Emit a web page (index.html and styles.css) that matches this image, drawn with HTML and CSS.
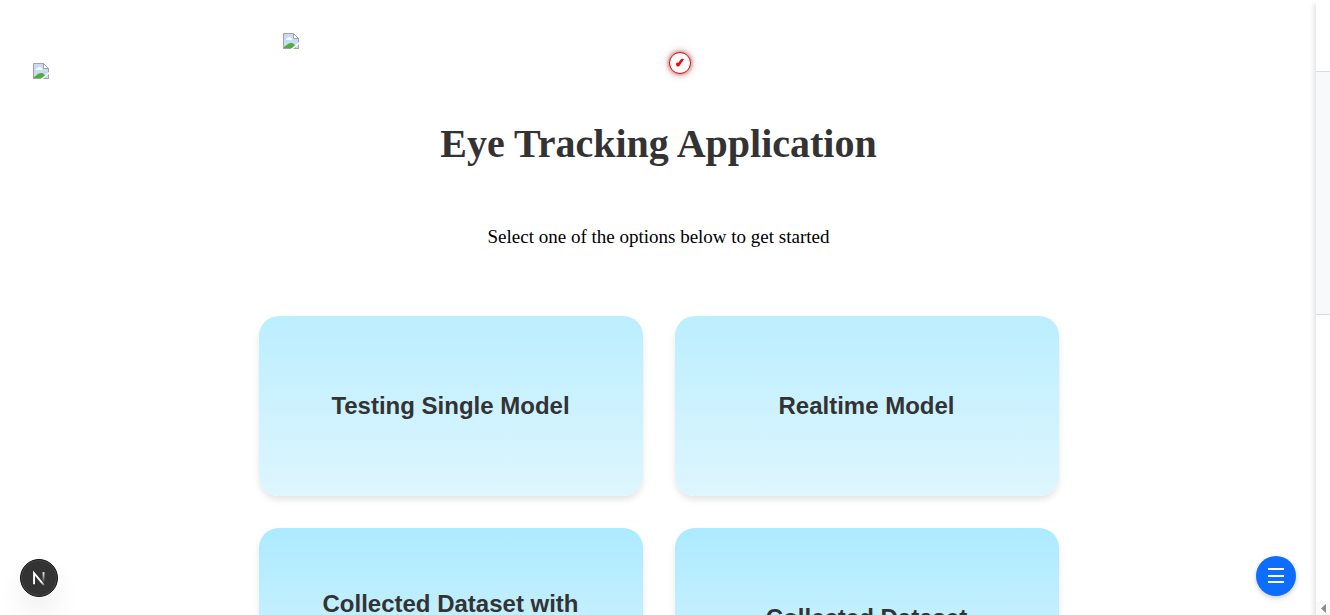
FILE: index.html
```html
<!DOCTYPE html>
<html lang="en">
<head>
<meta charset="utf-8">
<meta name="viewport" content="width=device-width, initial-scale=1">
<title>Eye Tracking Application</title>
<link rel="stylesheet" href="styles.css">
</head>
<body>
<svg class="defs" aria-hidden="true">
  <symbol id="missing-image" viewBox="0 0 16 16">
    <path d="M.5.5h10l5 5v10H.5z" fill="#c6dcf5" stroke="#a3a3a3"/>
    <path d="M3 6.500a1.500 1.500 0 0 1 1.500-1.500 2 2 0 0 1 3.500 0 1 1 0 0 1 0 2H3z" fill="#fff"/>
    <path d="M1 15v-1c2-1 4-4 7-4 2 0 4 1 5 5z" fill="#4caf3c"/>
    <path d="M16.500 8.500v2l-6 6H7z" fill="#fff"/>
    <path d="M10.500.5v5h5z" fill="#fff" stroke="#a3a3a3"/>
    <path d="M0 15.500h8M10.500 15.500h5.500v-4" fill="none" stroke="#a3a3a3"/>
  </symbol>
</svg>
<main class="page">
  <header class="logos">
    <svg class="logo logo-low" role="img" aria-label="Logo"><use href="#missing-image"/></svg>
    <svg class="logo" role="img" aria-label="Logo"><use href="#missing-image"/></svg>
  </header>
  <h1 class="title">Eye Tracking Application</h1>
  <p class="lead">Select one of the options below to get started</p>
  <div class="options">
    <button class="option option-light" type="button">Testing Single Model</button>
    <button class="option option-light" type="button">Realtime Model</button>
    <button class="option" type="button">Collected Dataset with<br>&nbsp;</button>
    <button class="option" type="button">Collected Dataset</button>
  </div>
</main>
<aside class="drawer">
  <div class="drawer-head"></div>
  <div class="drawer-section"></div>
  <div class="drawer-body"></div>
  <svg class="drawer-arrow" viewBox="0 0 14 14" aria-hidden="true"><path d="M10 3v9L5 7.500z" fill="#8b8b8b"/></svg>
</aside>
<div class="marker">✓</div>
<button class="dev-badge" type="button" aria-label="Open developer tools">
  <svg viewBox="0 0 40 40" width="36" height="36" fill="none" aria-hidden="true">
    <defs>
      <linearGradient id="diagonal" gradientUnits="userSpaceOnUse" x1="23" y1="24" x2="27" y2="29"><stop stop-color="#fff"/><stop offset="1" stop-color="#fff" stop-opacity="0"/></linearGradient>
      <linearGradient id="stem" gradientUnits="userSpaceOnUse" x1="25" y1="13" x2="25" y2="25"><stop stop-color="#fff"/><stop offset="1" stop-color="#fff" stop-opacity="0"/></linearGradient>
    </defs>
    <path d="M14.500 27V14.500L25.500 28" stroke="url(#diagonal)" stroke-width="2.100"/>
    <path d="M25 13.500v13" stroke="url(#stem)" stroke-width="2.100"/>
  </svg>
</button>
<button class="menu-button" type="button" aria-label="Open menu">
  <svg viewBox="0 0 16 16" width="16" height="16" aria-hidden="true"><path d="M0 1h16M0 8h16M0 14h16" stroke="#fff" stroke-width="2"/></svg>
</button>
</body>
</html>
```
FILE: styles.css
```css
* {
  box-sizing: border-box;
}

html,
body {
  height: 100%;
  margin: 0;
}

body {
  overflow: hidden;
  padding-right: 13px;
  background: #fff;
  color: #000;
  font-family: "Liberation Serif", "Times New Roman", serif;
}

button {
  padding: 0;
  border: 0;
  cursor: pointer;
}

.defs {
  position: absolute;
  width: 0;
  height: 0;
}

.page {
  display: flex;
  flex-direction: column;
  align-items: center;
}

.logos {
  display: flex;
  align-self: stretch;
  align-items: flex-start;
  gap: 234px;
  padding: 33px 33px 0;
}

.logo {
  width: 16px;
  height: 16px;
}

.logo-low {
  margin-top: 30px;
}

.title {
  margin: 41px 0 0;
  color: #333;
  font-size: 40px;
  line-height: 48px;
}

.lead {
  margin: 57px 0 0;
  font-size: 19px;
  line-height: 24px;
}

.options {
  display: grid;
  grid-template-columns: 1fr 1fr;
  gap: 32px;
  width: 100%;
  max-width: 800px;
  margin-top: 67px;
}

.option {
  min-height: 180px;
  padding: 32px;
  border-radius: 20px;
  background: linear-gradient(#adeaff, #d9f5fd);
  box-shadow: 0 4px 6px rgba(0, 0, 0, 0.1);
  color: #333;
  font-family: "Liberation Sans", Arial, sans-serif;
  font-size: 24px;
  font-weight: bold;
  line-height: 28px;
}

.option-light {
  background: linear-gradient(#bbeeff, #def6fe);
}

.drawer {
  position: fixed;
  top: 0;
  right: 0;
  bottom: 0;
  display: flex;
  flex-direction: column;
  width: 14px;
  background: #fff;
  box-shadow: -2px 4px 5px rgba(0, 0, 0, 0.12);
}

.drawer-head {
  height: 72px;
  border-bottom: 1px solid #ddd;
}

.drawer-section {
  height: 243px;
  border-bottom: 1px solid #ddd;
  background: #f8f9fa;
}

.drawer-body {
  flex: 1;
}

.drawer-arrow {
  height: 14px;
  background: #fafafa;
}

.marker {
  position: fixed;
  top: 52px;
  left: 669px;
  display: grid;
  place-items: center;
  width: 22px;
  height: 22px;
  border: 1px solid #f00;
  border-radius: 50%;
  background: #fff;
  box-shadow: 0 0 5px rgba(0, 0, 0, 0.5), 0 0 10px rgba(255, 0, 0, 0.3);
  color: #f00;
  font: bold 12px/20px "Liberation Sans", Arial, sans-serif;
  -webkit-text-stroke: 1px #f00;
}

.dev-badge {
  position: fixed;
  bottom: 18px;
  left: 20px;
  display: grid;
  place-items: center;
  width: 38px;
  height: 38px;
  border: 1px solid #111;
  border-radius: 50%;
  background: #333;
  box-shadow: inset 0 0 0 1px #484848, 0 16px 32px -8px rgba(0, 0, 0, 0.2);
}

.menu-button {
  position: fixed;
  right: 34px;
  bottom: 19px;
  display: grid;
  place-items: center;
  width: 40px;
  height: 40px;
  border-radius: 50%;
  background: #0d6efd;
  box-shadow: 0 2px 5px rgba(0, 0, 0, 0.2);
}
```
